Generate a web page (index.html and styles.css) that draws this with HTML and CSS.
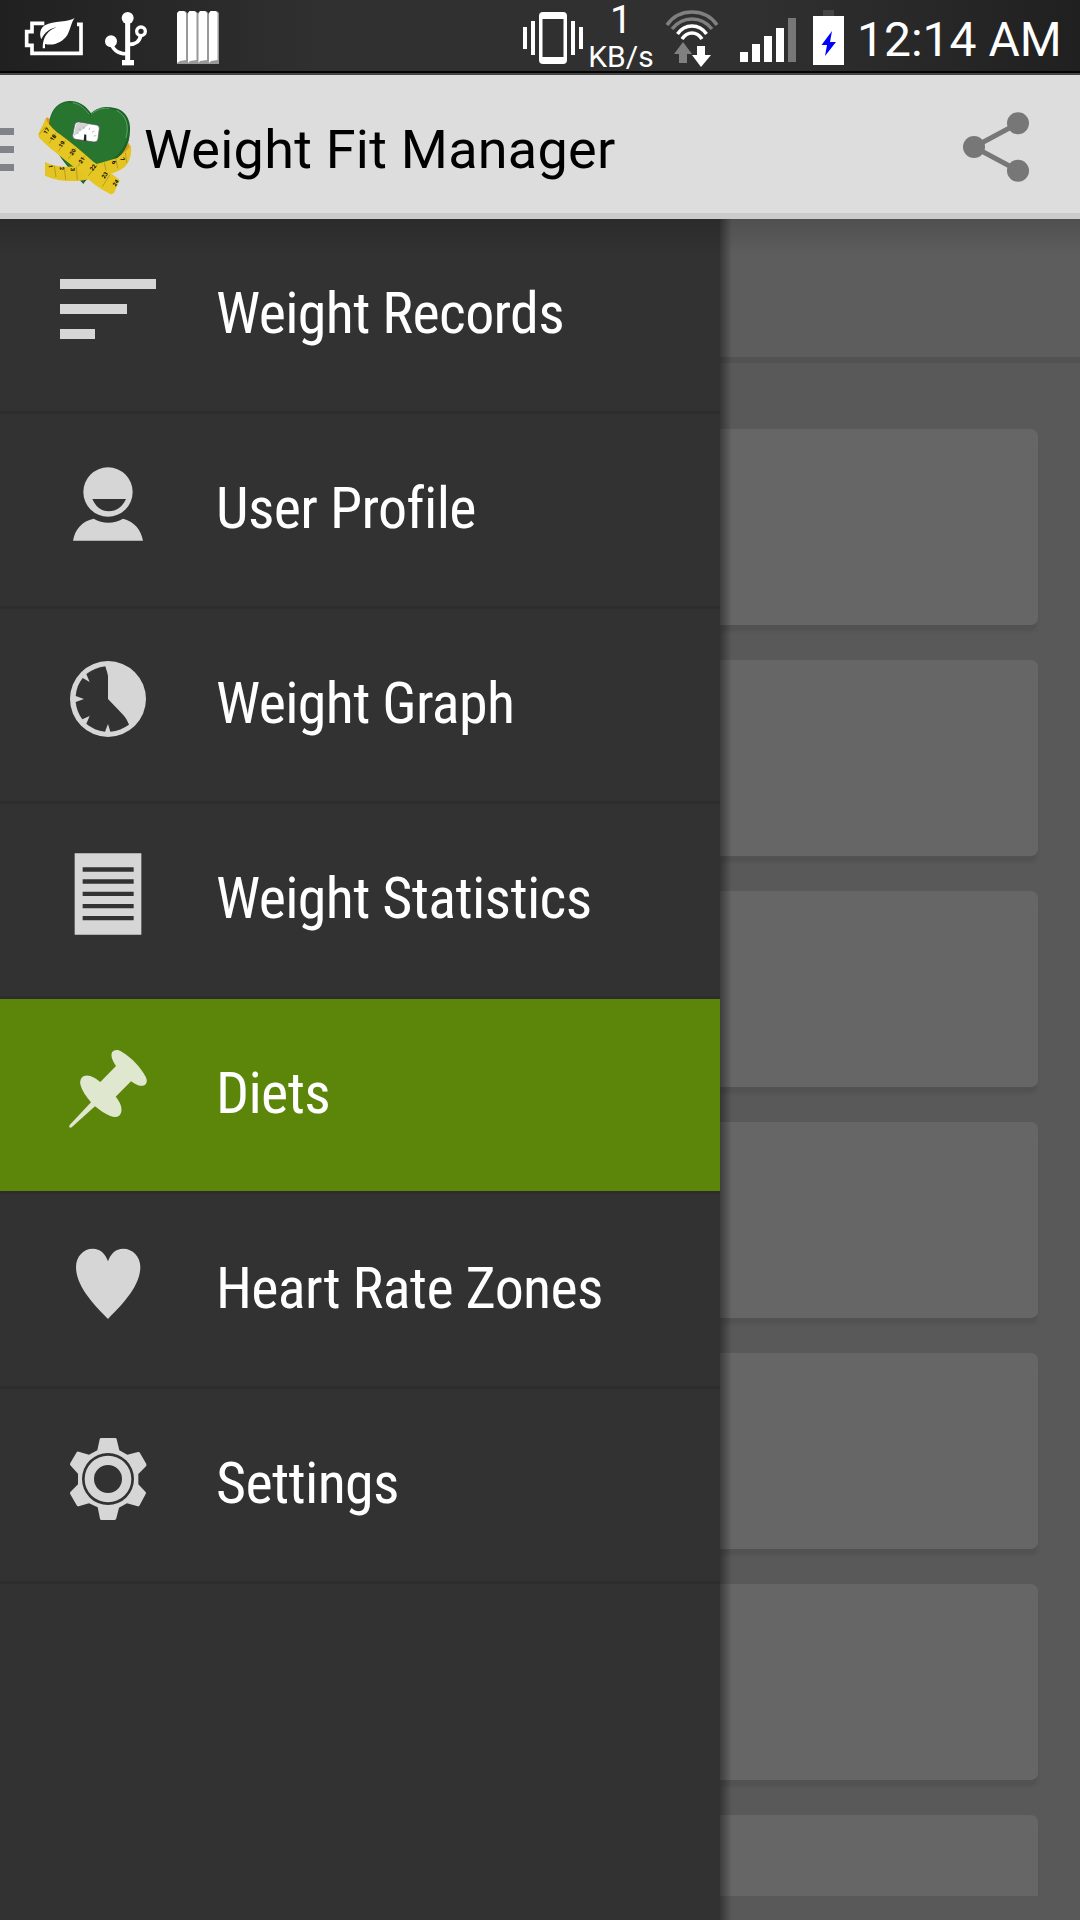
FILE: index.html
```
<!DOCTYPE html>
<html lang="en">
<head>
    <meta charset="UTF-8">
    <title>Weight Fit Manager</title>
    <link rel="stylesheet" href="styles.css">
</head>
<body>
    <div class="status-bar">
        <div class="status-left">
            <!-- power saver -->
            <svg class="eco" width="60" height="42" viewBox="72 48 180 126">
                <path d="M133 70H96V95H80V136H96V160H243V73H231" fill="none" stroke="#fff" stroke-width="11"/>
                <path d="M224 54C208 67 160 62 135 76C119 85 118 105 124 118C134 96 151 85 170 82C145 91 128 109 128 145H135V132C163 138 187 127 202 105C212 88 213 68 224 54Z" fill="#fff"/>
            </svg>
            <!-- usb -->
            <svg class="usb" width="44" height="56" viewBox="312 33 132 168">
                <path d="M383 50V185M333 124C336 148 354 163 383 161M383 133C408 135 420 122 422 106" fill="none" stroke="#fff" stroke-width="11"/>
                <path d="M383 54V185" stroke="#fff" stroke-width="15"/>
                <circle cx="383" cy="54" r="18" fill="#fff"/>
                <circle cx="333" cy="124" r="18" fill="#fff"/>
                <circle cx="423" cy="94" r="13" fill="#2a2a2a" stroke="#fff" stroke-width="10"/>
                <rect x="366" y="180" width="36" height="16" fill="#fff"/>
            </svg>
            <svg class="stripes" width="42" height="53" viewBox="0 0 42 53">
                <path d="M3 0H8L10.500 2V53H0V3ZM13 0H18L21 2V53H10.500V3ZM24 0H29L31.500 2V53H21V3ZM35 0H40L42 2V53H31.500V3Z" fill="#999"/>
                <path d="M2 0H7L9 2V49L3 50L0 52V2ZM12.500 0H17.500L19.500 2V49L13 50L11 52V2ZM23 0H28L30 2V49L23 50L21.500 52V2ZM33.500 0H38.500L40.500 2V49L34 50L32 52V2Z" fill="#fff"/>
            </svg>
        </div>
        <div class="status-right">
            <!-- vibrate -->
            <svg width="60" height="52" viewBox="523 12 60 52">
                <path d="M523 27h4v22h-4zM531 21h4v34h-4zM571 21h4v34h-4zM579 27h4v22h-4z" fill="#fff"/>
                <path fill-rule="evenodd" d="M543 12H563Q567 12 567 16V60Q567 64 563 64H543Q539 64 539 60V16Q539 12 543 12ZM542.500 19V57H563.500V19Z" fill="#fff"/>
            </svg>
            <div class="speed">
                <span class="speed-value">1</span>
                <span class="speed-unit">KB/s</span>
            </div>
            <!-- wifi -->
            <svg class="wifi" width="54" height="58" viewBox="665 10 54 58">
                <g fill="none" stroke-width="3.500">
                    <path d="M667 25Q676 12 692 12T717 25M672 29Q680 19 692 19T712 29" stroke="#808080"/>
                    <path d="M677.500 34Q683 26 692 26T706.500 34M682 39Q686 33 692 33T702 39" stroke="#fff"/>
                </g>
                <path d="M683 42L692 54H687V63H679V54H674Z" fill="#808080"/>
                <path d="M697 46H705V55H711L701 67L692 55H697Z" fill="#fff"/>
            </svg>
            <!-- signal -->
            <svg class="signal" width="56" height="44" viewBox="740 18 56 44">
                <path d="M740 52h8v10h-8zM752 44h8v18h-8zM764 36h8v26h-8zM776 28h8v34h-8z" fill="#fff"/>
                <path d="M788 18h8v44h-8z" fill="#777"/>
            </svg>
            <!-- battery -->
            <svg class="battery" width="31" height="55" viewBox="813 10 31 55">
                <path d="M823 10h11v6h-11z" fill="#444"/>
                <path d="M813 16h31v49h-31z" fill="#fff"/>
                <path d="M832 31L821.500 45H827L825 56L836 42H830Z" fill="#0000ff"/>
            </svg>
            <span class="clock">12:14 AM</span>
        </div>
    </div>

    <div class="action-bar">
        <svg class="drawer-toggle" width="14" height="43" viewBox="0 0 14 43">
            <path d="M0 0h14v7H0zM0 18h14v7H0zM0 36h14v7H0z" fill="#818388"/>
        </svg>
        <!-- app logo -->
        <svg class="logo" width="98" height="98" viewBox="108 84 294 294">
            <path d="M150 146L140 142L134 154L152 172ZM386 218L352 258L372 268L393 240Z" fill="#e09a22"/>
            <path d="M250 342C220 310 160 250 150 190C139 132 170 94 208 93C238 92 260 110 273 130C292 112 318 108 340 113C383 120 395 158 389 196C384 244 352 268 320 290C290 308 262 320 250 342Z" fill="#1b6327"/>
            <path d="M250 336C220 300 160 250 151 185C142 132 172 97 205 97C235 97 254 115 269 138C290 117 315 113 338 118C377 124 388 160 382 196C377 238 350 260 318 282C290 300 262 310 250 336Z" fill="#27752f"/>
            <path d="M218 98C243 102 256 118 268 134M273 133C288 120 306 113 328 115M350 121C379 137 388 165 378 204" fill="none" stroke="#5aa565" stroke-width="3"/>
            <path d="M236 156L290 165Q299 167 298 176L294 207Q292 217 282 216L227 208Q217 206 218 196L224 165Q226 155 236 156Z" fill="#fff" stroke="#52505a" stroke-width="2"/>
            <path d="M236 158L268 163L221 199L227 167Q229 157 236 158Z" fill="#d2d2d2"/>
            <path d="M231 189L236 191M236 176L242 180M251 170L252 177M269 173L267 180M283 183L276 187M289 197L281 198" stroke="#999" stroke-width="2"/>
            <path d="M253 193L259 194V213L251 212Z" fill="#222"/>
            <path d="M135 276C162 289 195 293 229 289C260 293 305 278 352 264C374 247 387 237 393 224Q396 258 383 280C372 298 350 306 330 312L270 328L232 333C188 335 155 327 135 317Z" fill="#e4c422"/>
            <path d="M137 146C142 158 158 177 180 193C215 218 245 245 280 275C310 296 338 310 359 330L343 367Q337 377 325 369C295 354 270 333 244 309C210 280 155 242 118 204Q113 200 116 190Z" fill="#e6c622"/>
            <path d="M118 193L137 170M147 220L168 189M175 244L197 211M205 267L228 234M234 289L254 257M264 318L292 284M307 350L329 315M163 287L168 321M193 292L197 330M229 290L232 331M313 278L318 302M347 265L353 295M376 248L380 278" stroke="#a18a18" stroke-width="2" fill="none"/>
            <g class="tape-text">
                <text transform="translate(144 186) rotate(-55)">17</text>
                <text transform="translate(164 206) rotate(-55)">18</text>
                <text transform="translate(190 226) rotate(-55)">19</text>
                <text transform="translate(223 249) rotate(-55)">20</text>
                <text transform="translate(250 274) rotate(-55)">21</text>
                <text transform="translate(284 296) rotate(-55)">22</text>
                <text transform="translate(319 319) rotate(-55)">23</text>
                <text transform="translate(352 342) rotate(-55)">24</text>
                <text transform="translate(146 290) rotate(85)">1</text>
                <text transform="translate(180 296) rotate(85)">2</text>
                <text transform="translate(212 299) rotate(85)">3</text>
                <text transform="translate(336 279) rotate(70)">6</text>
                <text transform="translate(362 270) rotate(65)">7</text>
            </g>
        </svg>
        <h1 class="title">Weight Fit Manager</h1>
        <!-- share -->
        <svg class="share" width="66" height="70" viewBox="849 126 198 210">
            <path d="M1014 160L882 231L1014 302" fill="none" stroke="#777" stroke-width="15"/>
            <g fill="#777">
                <circle cx="1014" cy="160" r="33"/>
                <circle cx="882" cy="231" r="33"/>
                <circle cx="1014" cy="302" r="33"/>
            </g>
        </svg>
    </div>

    <div class="main">
        <ul class="drawer">
            <li class="drawer-item">
                <svg class="icon" width="120" height="120" viewBox="-36 -78 360 360">
                    <path d="M0 0H288V30H0ZM0 75H201V105H0ZM0 150H105V180H0Z"/>
                </svg>
                <span class="label">Weight Records</span>
            </li>
            <li class="drawer-item">
                <svg class="icon" width="120" height="120" viewBox="24 594 360 360">
                    <path fill-rule="evenodd" d="M204 652A74 74 0 1 1 204 800A74 74 0 1 1 204 652ZM157 747C166 769 184 784 206 784C229 784 249 769 258 747Z"/>
                    <path d="M99 872C105 838 126 813 161 806C188 822 222 822 249 806C282 814 303 838 309 872Z"/>
                </svg>
                <span class="label">User Profile</span>
            </li>
            <li class="drawer-item">
                <svg class="icon" width="120" height="120" viewBox="24 39 360 360">
                    <path fill-rule="evenodd" d="M204 93A114 114 0 1 1 204 321A114 114 0 1 1 204 93ZM196 109C174 112 155 120 139 132L149 156L128 144C116 159 109 176 107 198L132 207L107 216C109 236 116 253 127 268L149 258L139 281C156 295 173 302 195 305L204 282L211 305C232 303 251 295 267 284C262 271 257 263 247 252L204 207V138C202 127 199 119 196 109Z"/>
                </svg>
                <span class="label">Weight Graph</span>
            </li>
            <li class="drawer-item">
                <svg class="icon" width="120" height="120" viewBox="24 624 360 360">
                    <path fill-rule="evenodd" d="M104 670H304V914H104ZM128 712V725H281V712ZM128 748V761H281V748ZM128 785V798H281V785ZM128 822V835H281V822ZM128 858V871H281V858Z"/>
                </svg>
                <span class="label">Weight Statistics</span>
            </li>
            <li class="drawer-item active">
                <svg class="icon" width="120" height="120" viewBox="24 39 360 360">
                    <path d="M216 97C224 88 234 88 246 96C275 113 302 142 317 170C326 188 316 200 299 197C290 195 283 190 273 184L227 230C239 244 247 261 244 275C241 290 228 294 211 288C194 281 179 271 165 259L95 322C89 326 86 321 89 315L153 247C140 232 126 213 121 193C118 172 133 162 151 168C163 172 171 179 181 186L228 138C219 124 211 110 216 97Z"/>
                </svg>
                <span class="label">Diets</span>
            </li>
            <li class="drawer-item">
                <svg class="icon" width="120" height="120" viewBox="24 624 360 360">
                    <path d="M204 897C166 858 108 800 108 741C108 709 131 686 158 686C182 686 196 702 204 724C212 702 226 686 250 686C278 686 301 710 301 741C301 800 242 858 204 897Z"/>
                </svg>
                <span class="label">Heart Rate Zones</span>
            </li>
            <li class="drawer-item">
                <svg class="icon" width="120" height="120" viewBox="24 69 360 360">
                    <path fill-rule="evenodd" d="M183 114H226Q229 114 230 118L238 151L262 164L294 156Q298 155 300 159L319 192Q320 196 318 199L295 222V253L317 276Q319 279 317 282L299 316Q297 320 293 319L261 310L237 323L229 355Q228 360 224 360H184Q181 360 180 356L173 322L147 310L116 319Q112 320 110 316L91 283Q89 279 91 276L114 253V221L91 196Q89 193 91 189L110 157Q112 154 116 155L147 164L172 151L179 118Q180 114 183 114ZM204 159A78 78 0 1 0 204 315A78 78 0 1 0 204 159Z"/>
                    <path fill-rule="evenodd" d="M204 167A70 70 0 1 1 204 307A70 70 0 1 1 204 167ZM204 195A42 42 0 1 0 204 279A42 42 0 1 0 204 195Z"/>
                </svg>
                <span class="label">Settings</span>
            </li>
        </ul>
        <div class="content">
            <div class="content-header"></div>
            <div class="card-list">
                <div class="card"></div>
                <div class="card"></div>
                <div class="card"></div>
                <div class="card"></div>
                <div class="card"></div>
                <div class="card"></div>
                <div class="card"></div>
            </div>
        </div>
    </div>
</body>
</html>
```
FILE: styles.css
```
* {
    box-sizing: border-box;
}
body {
    margin: 0;
    width: 1080px;
    height: 1920px;
    overflow: hidden;
    display: flex;
    flex-direction: column;
    font-family: Roboto, "Liberation Sans", sans-serif;
    background: #595959;
}
svg {
    display: block;
    flex-shrink: 0;
}

/* status bar */
.status-bar {
    height: 75px;
    flex-shrink: 0;
    display: flex;
    justify-content: space-between;
    background: linear-gradient(90deg, #202020, #303030 30%, #303030 70%, #202020);
    border-bottom: 2px solid #444;
    box-shadow: inset 0 -2px 0 #050505;
    color: #fff;
}
.status-left {
    display: flex;
    padding-left: 24px;
}
.eco {
    margin-top: 16px;
}
.usb {
    margin: 11px 0 0 20px;
}
.stripes {
    margin: 11px 0 0 29px;
}
.status-right {
    display: flex;
    width: 557px;
}
.status-right > svg:first-child {
    margin-top: 12px;
}
.speed {
    width: 76px;
    display: flex;
    flex-direction: column;
    align-items: center;
}
.speed-value {
    font-size: 39px;
    line-height: 41px;
}
.speed-unit {
    font-size: 30px;
    line-height: 32px;
}
.wifi {
    margin: 10px 0 0 6px;
}
.signal {
    margin: 18px 0 0 21px;
}
.battery {
    margin: 10px 0 0 17px;
}
.clock {
    margin-left: 13px;
    font-size: 48px;
    line-height: 79px;
    white-space: nowrap;
}

/* action bar */
.action-bar {
    height: 144px;
    flex-shrink: 0;
    display: flex;
    background: #ddd;
    border-bottom: 6px solid #cbcbcb;
}
.drawer-toggle {
    margin-top: 53px;
}
.logo {
    margin: 23px 0 0 22px;
}
.tape-text {
    font-size: 17px;
    font-weight: bold;
    text-anchor: middle;
}
.title {
    margin: 0 0 0 10px;
    flex: 1;
    font-size: 54px;
    font-weight: 400;
    letter-spacing: 0.25px;
    line-height: 150px;
    color: #000;
    white-space: nowrap;
}
.share {
    margin: 37px 51px 0 0;
}

/* main area */
.main {
    flex: 1;
    min-height: 0;
    display: flex;
}
.drawer {
    width: 720px;
    margin: 0;
    padding: 0;
    list-style: none;
    background: #323232;
}
.drawer-item {
    height: 195px;
    display: flex;
    border-bottom: 3px solid #2d2d2d;
}
.drawer-item:first-child {
    background: linear-gradient(#2b2b2b, #323232 36px);
}
.drawer-item.active {
    background: #5c860a;
    background-clip: padding-box;
}
.icon {
    margin: 34px 0 0 48px;
    fill: #d6d6d6;
}
.active .icon {
    fill: #dfe7cf;
}
.label {
    margin-left: 48px;
    font-family: "Roboto Condensed", Roboto, sans-serif;
    font-stretch: 75%;
    font-size: 58px;
    font-weight: 430;
    letter-spacing: -0.65px;
    line-height: 188px;
    color: #fff;
    white-space: nowrap;
}
.content {
    flex: 1;
    display: flex;
    flex-direction: column;
    background: #595959;
    position: relative;
}
/* shadow cast by the open drawer */
.content::before {
    content: "";
    position: absolute;
    top: 0;
    bottom: 0;
    left: 0;
    width: 12px;
    z-index: 1;
    background: linear-gradient(90deg, rgba(0,0,0,0.4), transparent);
}
.content-header {
    height: 144px;
    flex-shrink: 0;
    background: linear-gradient(#505050, #5d5d5d 36px);
    border-bottom: 6px solid #525252;
}
.card-list {
    height: 1533px;
    padding: 66px 42px 0 0;
    overflow: hidden;
}
.card {
    height: 196px;
    margin-bottom: 35px;
    background: #666;
    border-radius: 0 7px 7px 0;
    box-shadow: 0 7px 3px -1px #525252;
}
```
